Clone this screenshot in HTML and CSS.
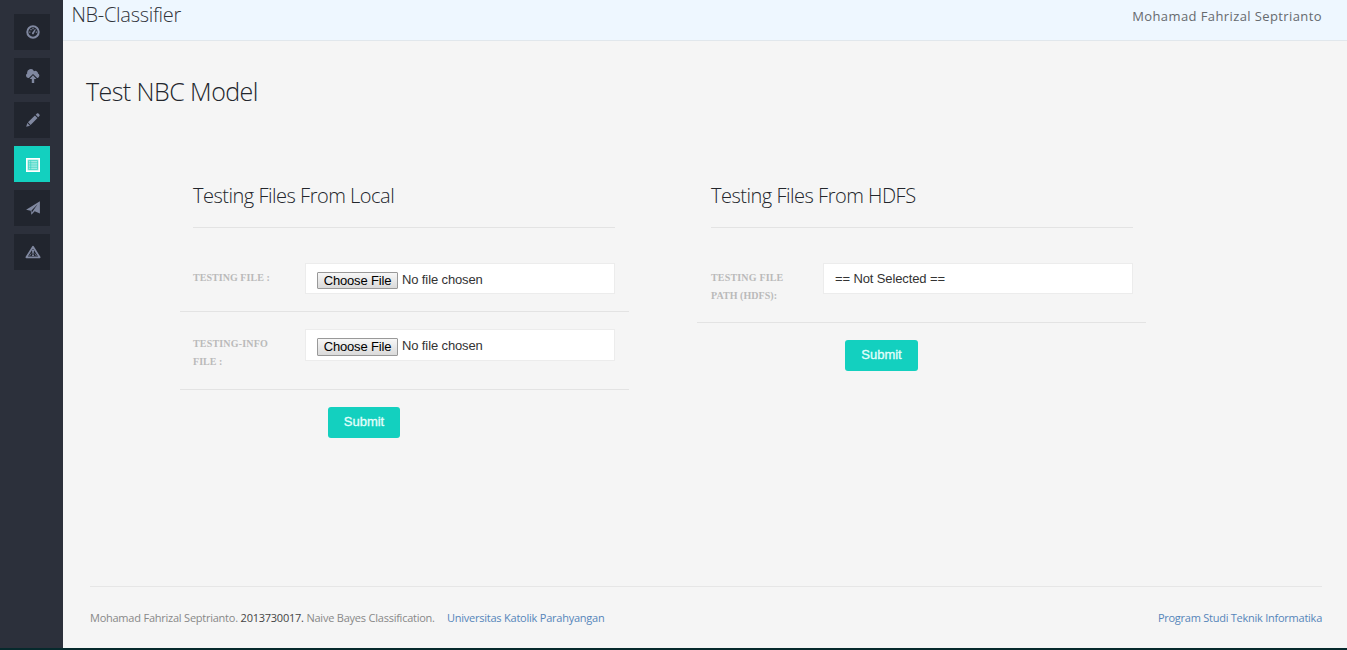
FILE: index.html
```html
<!DOCTYPE html>
<html lang="en">
<head>
<meta charset="utf-8">
<title>NB-Classifier</title>
<link rel="stylesheet" href="styles.css">
</head>
<body>
<div class="app">
  <nav class="sidebar">
    <a class="nav-item" href="#"><svg width="14" height="14" viewBox="0 0 14 14"><circle cx="7" cy="7" r="5.7" fill="none" stroke="currentColor" stroke-width="2"/><path d="M6.1 7.8 9 3.9l.8.5-1.9 4.2a1 1 0 1 1-1.8-.8z" fill="currentColor"/><path d="M3.2 6.5h1.2v1.2H3.2zM4.4 4h1.2v1.2H4.4zM6.4 3.1h1.2v1.2H6.4zM9.8 6.5H11v1.2H9.8z" fill="currentColor"/></svg></a>
    <a class="nav-item" href="#"><svg width="14" height="14" viewBox="0 0 14 14"><path d="M2.4 9A2.5 2.5 0 0 1 1.2 4.4 3.6 3.6 0 0 1 8 2.2a2.7 2.7 0 0 1 4 2.4A2.4 2.4 0 0 1 11.8 9h-.6L7 4.9 2.9 9z" fill="currentColor"/><path d="M7 6.2 10.4 10H8.2v4H5.8v-4H3.6z" fill="currentColor"/></svg></a>
    <a class="nav-item" href="#"><svg width="14" height="14" viewBox="0 0 14 14"><path d="M.2 13.8 1.3 10 4 12.7zM2 9.3l6.9-6.8 2.6 2.6-6.9 6.8zM9.7 1.8 10.9.6c.5-.5 1-.5 1.5 0l1 1c.5.5.5 1 0 1.5l-1.2 1.2z" fill="currentColor"/></svg></a>
    <a class="nav-item active" href="#"><svg width="14" height="14" viewBox="0 0 14 14"><path d="M.7.7h12.6v12.6H.7z" fill="#9eebe1" stroke="currentColor" stroke-width="1.5"/><path d="M2.5 2.5h9v9h-9zM2.5 4.7h9M2.5 7h9M2.5 9.3h9M4.7 2.5v9" fill="none" stroke="#2bd0c0" stroke-width=".6"/></svg></a>
    <a class="nav-item" href="#"><svg width="14" height="14" viewBox="0 0 14 14"><path d="M.1 8.8 13.9.2v12.2L8.7 10.2 5.4 13.8 4.7 9.8zM5.5 9.5l.2 2.2 5.9-8.5z" fill="currentColor" fill-rule="evenodd"/></svg></a>
    <a class="nav-item" href="#"><svg width="16" height="14" viewBox="0 0 16 14"><path d="M8 1.7 14.6 12.3H1.4z" fill="none" stroke="currentColor" stroke-width="1.8" stroke-linejoin="round"/><path d="M6.9 4.8h2.2L8.6 8.7H7.4zM7.1 9.4h1.8v1.7H7.1z" fill="currentColor"/><path d="m4.5 11 1.7-2.5M11.5 11 9.8 8.5" stroke="currentColor" stroke-width=".7"/></svg></a>
  </nav>
  <div class="content">
    <header class="topbar">
      <span class="brand">NB-Classifier</span>
      <span class="user">Mohamad Fahrizal Septrianto</span>
    </header>
    <main class="main">
      <h1 class="title">Test NBC Model</h1>
      <div class="panels">
        <section class="panel">
          <h2 class="heading">Testing Files From Local</h2>
          <div class="row first">
            <label class="label tight">TESTING FILE :</label>
            <div class="field file"><button class="choose">Choose File</button><span>No file chosen</span></div>
          </div>
          <div class="row second">
            <label class="label">TESTING-INFO<br><span class="tight">FILE :</span></label>
            <div class="field file"><button class="choose">Choose File</button><span>No file chosen</span></div>
          </div>
          <button class="submit">Submit</button>
        </section>
        <section class="panel">
          <h2 class="heading">Testing Files From HDFS</h2>
          <div class="row path">
            <label class="label">TESTING FILE<br><span class="tight">PATH (HDFS):</span></label>
            <div class="field select">== Not Selected ==</div>
          </div>
          <button class="submit">Submit</button>
        </section>
      </div>
    </main>
    <footer class="footer">
      <p class="credits"><span>Mohamad Fahrizal Septrianto.</span> <span class="npm">2013730017.</span> <span>Naive Bayes Classification.</span> <a class="campus" href="#">Universitas Katolik Parahyangan</a></p>
      <a class="program" href="#">Program Studi Teknik Informatika</a>
    </footer>
  </div>
</div>
</body>
</html>
```
FILE: styles.css
```css
* { box-sizing: border-box; }
body { margin: 0; background: #f5f5f5; font-family: "Open Sans", "Noto Sans", sans-serif; }
a { text-decoration: none; }
.app { display: flex; height: 650px; border-bottom: 2px solid #06292c; overflow: hidden; }
.sidebar { width: 63px; flex: none; background: #2c303b; padding: 14px 13px 0 14px; display: flex; flex-direction: column; gap: 8px; }
.nav-item { width: 36px; height: 36px; background: #21252e; color: #8088a0; display: flex; align-items: center; justify-content: center; padding-left: 1px; }
.nav-item.active { background: #13d0bf; color: #fff; padding-top: 1px; }
.content { flex: 1; display: flex; flex-direction: column; }
.topbar { height: 41px; flex: none; background: #eef7ff; border-bottom: 1px solid #e1e7ec; display: flex; justify-content: space-between; padding: 0 25px 0 8.5px; }
.brand { font-size: 20px; font-weight: 300; line-height: 30px; color: #30343a; letter-spacing: -0.3px; }
.user { font-size: 13px; line-height: 32px; color: #666a6e; letter-spacing: 0.4px; }
.main { flex: 1; padding: 36px 0 0 23px; }
.title { margin: 0; font-size: 25px; line-height: 29px; height: 30px; font-weight: 300; color: #23262c; letter-spacing: -0.55px; }
.panels { display: flex; gap: 67px; padding: 73px 0 0 94px; }
.panel { width: 450px; display: flex; flex-direction: column; align-items: flex-start; }
.heading { width: 422px; margin: 0 13px; height: 48px; border-bottom: 1px solid #e3e3e3; font-size: 20px; line-height: 31px; font-weight: 300; color: #23262c; white-space: nowrap; letter-spacing: -0.49px; }
.panel + .panel .heading { margin-left: 14px; }
.row { width: 449px; display: flex; border-bottom: 1px solid #e3e3e3; padding-left: 13px; }
.panel + .panel .row { padding-left: 14px; }
.first { margin-top: 35px; height: 49px; }
.second { padding-top: 17px; height: 78px; }
.path { margin-top: 35px; height: 60px; }
.label { width: 112px; flex: none; font: bold 10px/18px "Liberation Serif", serif; padding-top: 6px; color: #bababa; letter-spacing: 0.18px; }
.tight { letter-spacing: 0.05px; }
.field { width: 310px; height: 31px; background: #fff; border: 1px solid #ececec; font: 13px/29px "Liberation Sans", Arial, sans-serif; color: #333; padding-left: 11px; letter-spacing: -0.12px; }
.file { display: flex; align-items: flex-start; gap: 4px; }
.file span { line-height: 32px; }
.second .field { height: 32px; }
.choose { width: 81px; height: 17px; margin-top: 8px; padding: 0; border: 1px solid #999; border-radius: 1px; background: linear-gradient(#f7f7f7, #dadada); font: 13px/15px "Liberation Sans", Arial, sans-serif; color: #000; white-space: nowrap; letter-spacing: -0.15px; }
.second .choose { height: 18px; padding-bottom: 1px; }
.submit { margin: 17px 0 0 148px; width: 72px; height: 31px; padding: 0 0 2px; border: 0; border-radius: 3px; background: #13d0bf; color: #e4fffc; font: 13px/29px "Liberation Sans", Arial, sans-serif; -webkit-text-stroke: 0.3px #e4fffc; }
.panel + .panel .submit { width: 73px; }
.footer { height: 62px; margin: 0 25px 0 27px; border-top: 1px solid #e6e6e6; display: flex; justify-content: space-between; font-size: 11px; line-height: 62px; color: #888; white-space: nowrap; letter-spacing: -0.25px; }
.credits { margin: 0; word-spacing: 0.2px; }
.npm { color: #444; letter-spacing: -0.25px; }
.campus, .program { color: #5585ba; }
.campus { margin-left: 9.5px; }
```
